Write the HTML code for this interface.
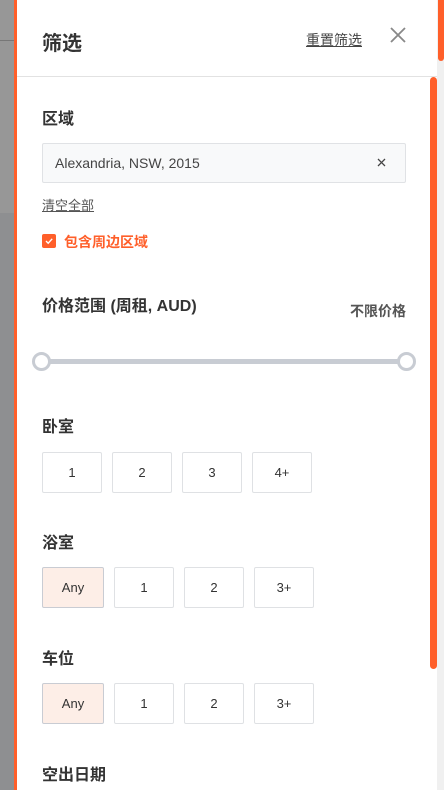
<!DOCTYPE html>
<html><head><meta charset="utf-8"><style>
*{margin:0;padding:0;box-sizing:border-box}
body{width:444px;height:790px;overflow:hidden;position:relative;background:#fff;font-family:"Liberation Sans","Noto Sans CJK SC",sans-serif;color:#333}
.lg{position:absolute;left:0;top:0;width:14px;height:790px;background:#8e8f91}
.lg1{position:absolute;left:0;top:0;width:14px;height:213px;background:#979797}
.lg2{position:absolute;left:0;top:40px;width:14px;height:1px;background:#777}
.ol{position:absolute;left:14px;top:0;width:3px;height:790px;background:#ff5f2a}
.rs{position:absolute;left:437px;top:0;width:7px;height:790px;background:#f0f0f0}
.rt{position:absolute;left:438px;top:0;width:6px;height:61px;background:#ff5f2a;border-radius:0 0 3px 3px}
.sb{position:absolute;left:430px;top:77px;width:7px;height:592px;background:#ff5f2a;border-radius:4px}
.hd{position:absolute;left:17px;top:76px;width:420px;height:1px;background:#e2e2e2}
.t{position:absolute;font-weight:bold;font-size:16px;color:#333}
.box{position:absolute;height:41px;border:1px solid #dfe1e4;border-radius:2px;font-size:13px;display:flex;align-items:center;justify-content:center;color:#333;background:#fff}
.any{background:#fdeee7;border-color:#c9ccd3}
</style></head><body>
<div class="lg"></div><div class="lg1"></div><div class="lg2"></div><div class="ol"></div>
<div class="rs"></div><div class="rt"></div>
<div class="t" style="left:42px;top:27px;font-size:20px">筛选</div>
<div style="position:absolute;left:306px;top:30px;font-size:14px;text-decoration:underline;color:#444">重置筛选</div>
<svg style="position:absolute;left:390px;top:27px" width="16" height="16"><path d="M1 1L15 15M15 1L1 15" stroke="#888" stroke-width="1.8"/></svg>
<div class="hd"></div>
<div class="sb"></div>
<div class="t" style="left:42px;top:105px">区域</div>
<div style="position:absolute;left:42px;top:143px;width:364px;height:40px;background:#f8f9fa;border:1px solid #e0e2e5;border-radius:2px;font-size:14px;padding:11px 0 0 12px;color:#444">Alexandria, NSW, 2015</div>
<svg style="position:absolute;left:377px;top:158px" width="9" height="9"><path d="M1 1L8 8M8 1L1 8" stroke="#444" stroke-width="1.3"/></svg>
<div style="position:absolute;left:42px;top:195px;font-size:13px;text-decoration:underline;color:#555">清空全部</div>
<div style="position:absolute;left:42px;top:234px;width:14px;height:14px;background:#ff5f2a;border-radius:2px"></div>
<svg style="position:absolute;left:44px;top:236px" width="10" height="10"><path d="M2 5L4.2 7.2L8.2 2.8" stroke="#fff" stroke-width="1.4" fill="none"/></svg>
<div style="position:absolute;left:64px;top:232px;font-size:14px;font-weight:bold;color:#ff5f2a">包含周边区域</div>
<div class="t" style="left:42px;top:292px">价格范围 (周租, AUD)</div>
<div style="position:absolute;left:350px;top:301px;font-size:14px;font-weight:bold;color:#555">不限价格</div>
<div style="position:absolute;left:42px;top:359px;width:364px;height:5px;background:#c8ccd3"></div>
<div style="position:absolute;left:32px;top:352px;width:19px;height:19px;border:3px solid #c8ccd3;border-radius:50%;background:#fff"></div>
<div style="position:absolute;left:397px;top:352px;width:19px;height:19px;border:3px solid #c8ccd3;border-radius:50%;background:#fff"></div>
<div class="t" style="left:42px;top:413px">卧室</div>
<div class="box" style="left:42px;top:452px;width:60px">1</div>
<div class="box" style="left:112px;top:452px;width:60px">2</div>
<div class="box" style="left:182px;top:452px;width:60px">3</div>
<div class="box" style="left:252px;top:452px;width:60px">4+</div>
<div class="t" style="left:42px;top:529px">浴室</div>
<div class="box any" style="left:42px;top:567px;width:62px">Any</div>
<div class="box" style="left:114px;top:567px;width:60px">1</div>
<div class="box" style="left:184px;top:567px;width:60px">2</div>
<div class="box" style="left:254px;top:567px;width:60px">3+</div>
<div class="t" style="left:42px;top:645px">车位</div>
<div class="box any" style="left:42px;top:683px;width:62px">Any</div>
<div class="box" style="left:114px;top:683px;width:60px">1</div>
<div class="box" style="left:184px;top:683px;width:60px">2</div>
<div class="box" style="left:254px;top:683px;width:60px">3+</div>
<div class="t" style="left:42px;top:761px">空出日期</div>
</body></html>
